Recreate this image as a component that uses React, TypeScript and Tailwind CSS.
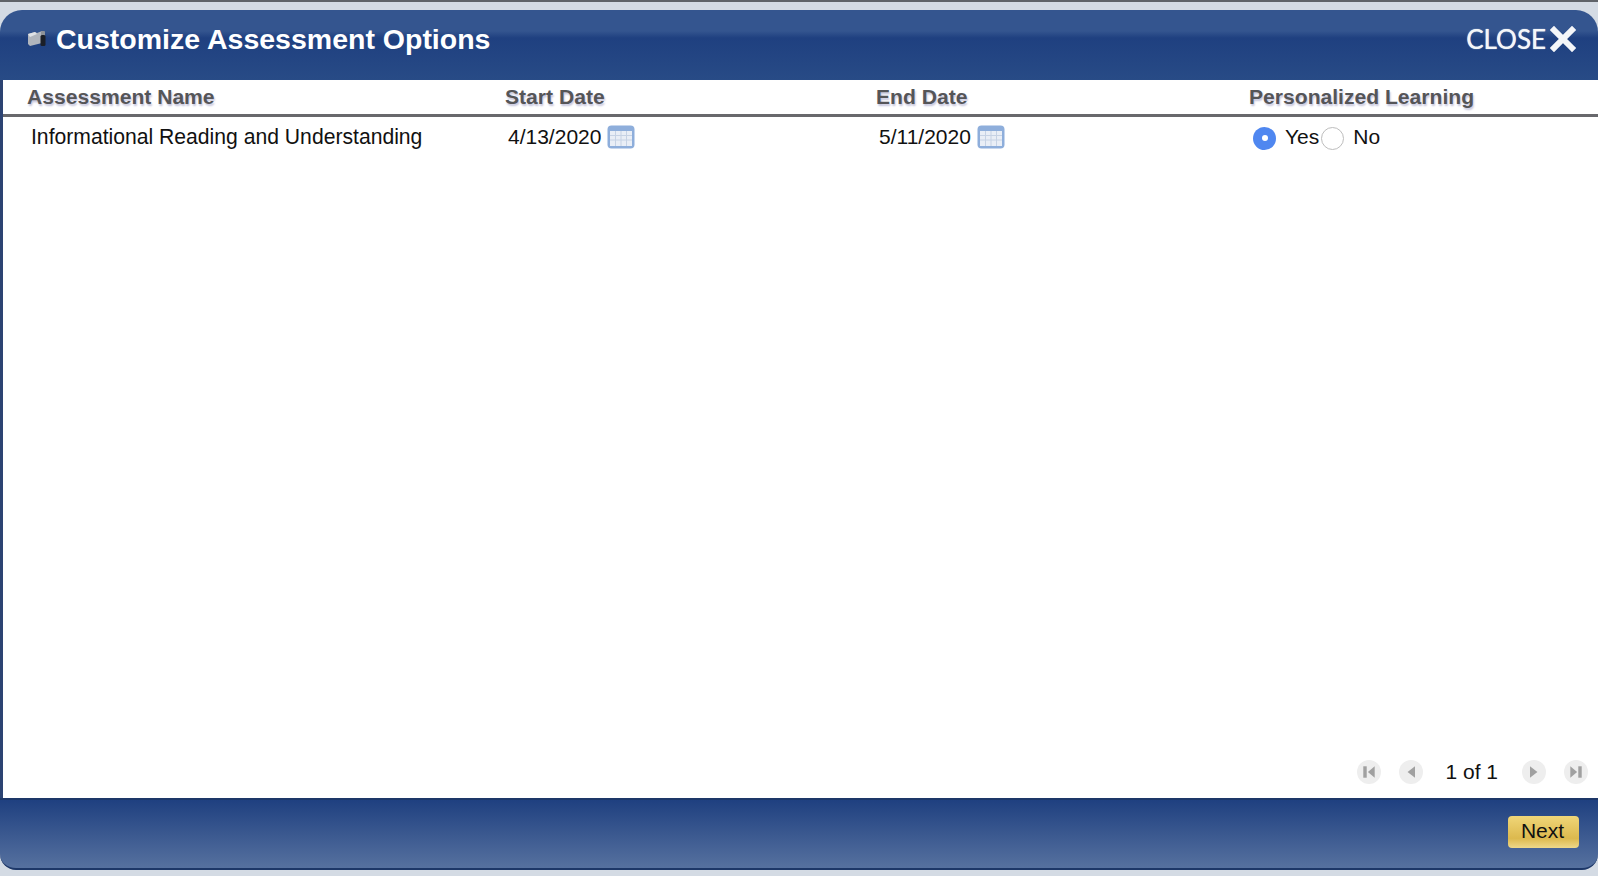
import * as React from "react"

const FONT = "font-['Liberation_Sans',Arial,sans-serif]"

function FolderIcon() {
  return (
    <svg width="20" height="20" viewBox="0 0 20 20" className="shrink-0">
      <path d="M1 5 L8 3 L10 4 L15 2 L15 14 L3 17 L1 15 Z" fill="#b0b5bd" />
      <path d="M1 5 L8 3 L10 5 L3 8 Z" fill="#dfe2e6" />
      <rect x="14" y="2" width="4" height="5" rx="1" fill="#8d9299" />
      <rect x="13.5" y="6" width="5" height="11" rx="1.5" fill="#1b1f27" />
    </svg>
  )
}

function CloseIcon() {
  return (
    <svg width="26" height="26" viewBox="0 0 26 26" className="shrink-0">
      <path d="M4 4 L22 22 M22 4 L4 22" stroke="#f4f6f9" strokeWidth="6" strokeLinecap="square" />
    </svg>
  )
}

function CalendarIcon() {
  return (
    <svg width="28" height="24" viewBox="0 0 28 24" className="shrink-0">
      <rect x="0.5" y="0.5" width="27" height="23" rx="4" fill="#8eaedb" />
      <rect x="3" y="6" width="22" height="15" fill="#e9eef6" />
      <path
        d="M3 10.5 H25 M3 15 H25 M8.5 6 V21 M14 6 V21 M19.5 6 V21"
        stroke="#c6d2e4"
        strokeWidth="1"
      />
    </svg>
  )
}

function PagerButton({ dir, bar }: { dir: "left" | "right"; bar?: boolean }) {
  return (
    <span className="flex h-6 w-6 items-center justify-center rounded-full bg-[#eeeeee]">
      <svg width="16" height="16" viewBox="0 0 14 14">
        {dir === "left" ? (
          <>
            <path d={bar ? "M12 2 V12 L6 7 Z" : "M10.5 2 V12 L4 7 Z"} fill="#a0a0a0" />
            {bar && <rect x="2" y="2" width="3" height="10" fill="#a0a0a0" />}
          </>
        ) : (
          <>
            <path d={bar ? "M2 2 V12 L8 7 Z" : "M3.5 2 V12 L10 7 Z"} fill="#a0a0a0" />
            {bar && <rect x="9" y="2" width="3" height="10" fill="#a0a0a0" />}
          </>
        )}
      </svg>
    </span>
  )
}

function DateCell({ value }: { value: string }) {
  return (
    <div className="flex items-center gap-[5px] pl-[3px]">
      <span className="text-[21px] leading-6 text-[#111]">{value}</span>
      <span className="relative left-[1px]">
        <CalendarIcon />
      </span>
    </div>
  )
}

const HEAD_TEXT =
  "text-[21.1px] font-bold leading-6 text-[#555558] [text-shadow:1px_2px_2px_#c4c4dc]"

export default function App() {
  return (
    <div className={`${FONT} flex h-[876px] w-[1598px] flex-col overflow-hidden bg-[#d4dbe4]`}>
      <div className="h-[2px] shrink-0 bg-[#5f6369]" />
      <div className="h-2 shrink-0" />

      <div className="flex h-[70px] shrink-0 items-start justify-between rounded-t-[22px] bg-[linear-gradient(#34558f_0,#34558f_30%,#1f4080_40%,#284b86_100%)] pl-[27px] pr-[22px]">
        <div className="flex items-center gap-[9px] pt-[13px]">
          <FolderIcon />
          <h1 className="text-[28.5px] font-bold leading-8 text-white">
            Customize Assessment Options
          </h1>
        </div>
        <div className="flex items-center gap-[4px] pt-[13px]">
          <span className="font-['Lato',sans-serif] text-[26px] leading-8 text-[#f4f6f9] [text-shadow:0_0_1px_#ffffff]">
            CLOSE
          </span>
          <CloseIcon />
        </div>
      </div>

      <div className="flex min-h-0 flex-1 flex-col border-l-[3px] border-l-[#2c4372] bg-white">
        <div className="grid h-[37px] shrink-0 grid-cols-[478px_371px_373px_1fr] items-center border-b-[3px] border-b-[#68686c] pl-[24px]">
          <div className={HEAD_TEXT}>Assessment Name</div>
          <div className={HEAD_TEXT}>Start Date</div>
          <div className={HEAD_TEXT}>End Date</div>
          <div className={HEAD_TEXT}>Personalized Learning</div>
        </div>

        <div className="grid shrink-0 grid-cols-[478px_371px_373px_1fr] items-center pl-[24px] pt-[8px]">
          <div className="pl-[4px] text-[21.15px] leading-6 text-[#111]">
            Informational Reading and Understanding
          </div>
          <DateCell value="4/13/2020" />
          <DateCell value="5/11/2020" />
          <div className="flex items-center pl-[4px] text-[21px] leading-6 text-[#111]">
            <span className="relative top-[1px] flex h-[23px] w-[23px] items-center justify-center rounded-full bg-[#4f87f0]">
              <span className="h-[6px] w-[6px] rounded-full bg-white" />
            </span>
            <span className="ml-[9px]">Yes</span>
            <span className="relative top-[1px] ml-[2px] h-[23px] w-[23px] rounded-full border border-[#bdbdbd] bg-white" />
            <span className="ml-[9px]">No</span>
          </div>
        </div>

        <div className="mt-auto flex items-center justify-end pb-[14px] pr-[10px]">
          <PagerButton dir="left" bar />
          <span className="ml-[18px]">
            <PagerButton dir="left" />
          </span>
          <span className="ml-[22px] mr-[24px] text-[21px] leading-6 text-[#111]">1 of 1</span>
          <PagerButton dir="right" />
          <span className="ml-[18px]">
            <PagerButton dir="right" bar />
          </span>
        </div>
      </div>

      <div className="flex h-[72px] shrink-0 items-start justify-end rounded-b-[16px] border-y-2 border-y-[#1d3768] bg-[linear-gradient(#1f4080,#56719f)] pr-[19px] pt-[16px]">
        <button className="h-[32px] w-[71px] rounded-[4px] bg-[linear-gradient(#f0d678,#dcb94e_70%,#eed88a)] pb-[3px] pr-[2px] text-[21px] leading-none text-[#111]">
          Next
        </button>
      </div>
      <div className="h-[6px] shrink-0" />
    </div>
  )
}
